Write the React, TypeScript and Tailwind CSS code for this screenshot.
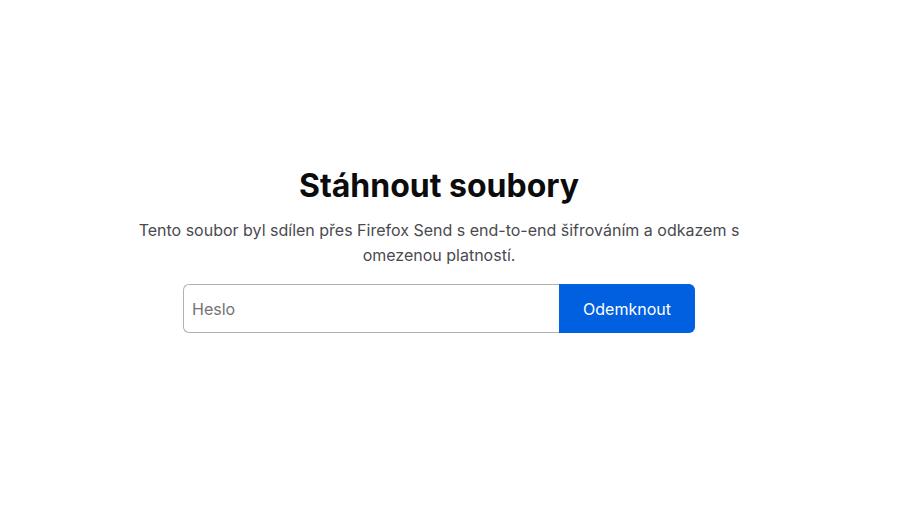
import { useState } from "react"

const App = () => {
  const [password, setPassword] = useState("")

  return (
    <main className="min-h-[532px] w-[878px] bg-white font-['Inter','Liberation_Sans',sans-serif]">
      <section className="flex flex-col items-center pt-[166px] text-center">
        <h1 className="text-[32px] font-bold leading-[40px] text-[#0c0c0d]">Stáhnout soubory</h1>
        <p className="mt-[12px] max-w-[610px] text-[16px] leading-[25px] text-[#4a4a4f]">
          Tento soubor byl sdílen přes Firefox Send s end-to-end šifrováním a odkazem s omezenou platností.
        </p>
        <form className="mt-[16px] flex w-[512px]" onSubmit={(e) => e.preventDefault()}>
          <input
            type="password"
            value={password}
            onChange={(e) => setPassword(e.target.value)}
            placeholder="Heslo"
            className="h-[49px] flex-1 rounded-l-[6px] border border-r-0 border-[#b1b1b3] px-[8px] text-[16px] text-[#0c0c0d] outline-none placeholder:text-[#737373]"
          />
          <button
            type="submit"
            className="h-[49px] w-[136px] rounded-r-[6px] bg-[#0060df] text-[16px] font-normal text-white"
          >
            Odemknout
          </button>
        </form>
      </section>
    </main>
  )
}

export default App
